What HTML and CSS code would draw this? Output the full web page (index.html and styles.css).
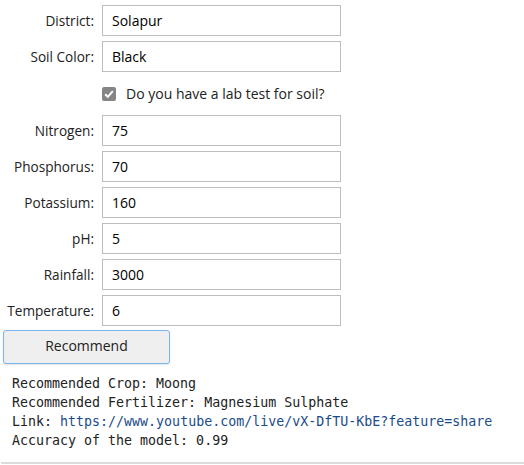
FILE: index.html
```html
<!DOCTYPE html>
<html>
<head>
<meta charset="utf-8">
<link rel="stylesheet" href="styles.css">
</head>
<body>
<form class="form">
  <div class="row"><label class="lbl">District:</label><input class="field" value="Solapur"></div>
  <div class="row"><label class="lbl">Soil Color:</label><input class="field" value="Black"></div>
  <div class="check-row">
    <span class="box"><svg width="14" height="14" viewBox="0 0 14 14"><rect x="0" y="0" width="14" height="14" rx="2" fill="#858585"/><path d="M3.2 7.2 L5.8 9.8 L10.8 4.2" fill="none" stroke="#fff" stroke-width="2"/></svg></span>
    <span class="check-text">Do you have a lab test for soil?</span>
  </div>
  <div class="row"><label class="lbl">Nitrogen:</label><input class="field" value="75"></div>
  <div class="row"><label class="lbl">Phosphorus:</label><input class="field" value="70"></div>
  <div class="row"><label class="lbl">Potassium:</label><input class="field" value="160"></div>
  <div class="row"><label class="lbl">pH:</label><input class="field" value="5"></div>
  <div class="row"><label class="lbl">Rainfall:</label><input class="field" value="3000"></div>
  <div class="row"><label class="lbl">Temperature:</label><input class="field" value="6"></div>
  <button type="button" class="btn">Recommend</button>
</form>
<div class="result">
  <div class="line">Recommended Crop: Moong</div>
  <div class="line">Recommended Fertilizer: Magnesium Sulphate</div>
  <div class="line">Link: <a class="link" href="#">https://www.youtube.com/live/vX-DfTU-KbE?feature=share</a></div>
  <div class="line">Accuracy of the model: 0.99</div>
</div>
<div class="rule"></div>
</body>
</html>
```
FILE: styles.css
```css
html, body {
  margin: 0;
  padding: 0;
  background: #fff;
}
body {
  font-family: "Open Sans", "Noto Sans", sans-serif;
  color: #222;
}
.form {
  display: flex;
  flex-direction: column;
  gap: 5px;
  padding-top: 5px;
  margin: 0;
}
.row {
  display: grid;
  grid-template-columns: 94px 239px;
  column-gap: 8px;
  align-items: center;
  height: 31px;
}
.lbl {
  text-align: right;
  font-size: 13.6px;
  color: #222;
}
.field {
  box-sizing: border-box;
  height: 31px;
  width: 239px;
  border: 1px solid #bdbdbd;
  border-radius: 0;
  padding: 0 9px;
  font-family: "Open Sans", "Noto Sans", sans-serif;
  font-size: 14px;
  color: #000;
  background: #fff;
  outline: none;
}
.check-row {
  display: flex;
  align-items: center;
  height: 33px;
  padding-left: 102px;
  gap: 10px;
}
.box {
  display: flex;
  width: 14px;
  height: 14px;
}
.check-text {
  font-size: 14px;
  color: #222;
}
.btn {
  align-self: flex-start;
  margin: -1px 0 0 3px;
  width: 167px;
  height: 34px;
  box-sizing: border-box;
  background: #efefef;
  border: 1px solid #7ab6ee;
  border-radius: 3px;
  font-family: "Open Sans", "Noto Sans", sans-serif;
  font-size: 14px;
  line-height: 30px;
  padding: 0 0 2px;
  color: #222;
  box-shadow: 0 1px 2px rgba(0,0,0,0.12);
}
.result {
  display: flex;
  flex-direction: column;
  margin: 10px 0 0 12px;
  font-family: "DejaVu Sans Mono", monospace;
  font-size: 13.3px;
  color: #222;
}
.line {
  height: 19px;
  line-height: 19px;
  white-space: pre;
}
.link {
  color: #1a4c8a;
  text-decoration: none;
}
.rule {
  margin: 12px 0 0 1px;
  height: 2px;
  background: #dcdcdc;
}
```
